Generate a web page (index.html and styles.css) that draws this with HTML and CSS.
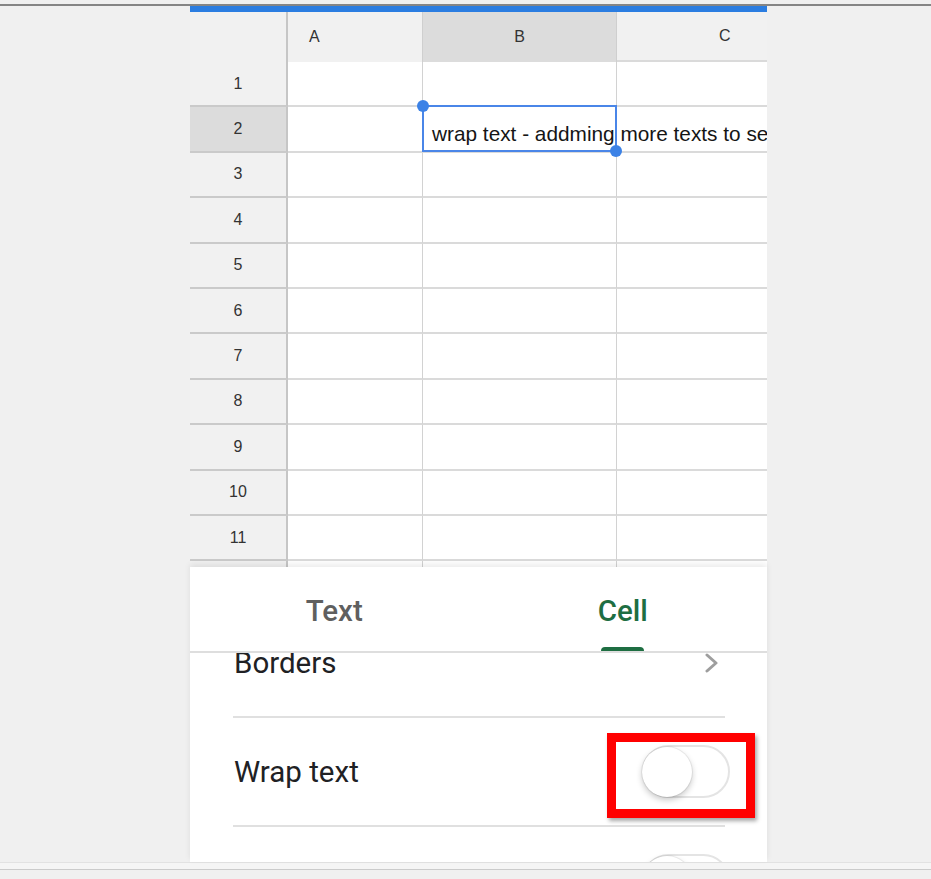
FILE: index.html
```html
<!DOCTYPE html>
<html>
<head>
<meta charset="utf-8">
<title>Wrap text</title>
<link rel="stylesheet" href="styles.css">
</head>
<body>
<div class="topline"></div>
<div class="stage">
  <div class="phone">
    <div class="bluebar"></div>
    <div class="grid">
      <div class="corner"></div>
      <div class="ch a">A</div>
      <div class="ch b sel">B</div>
      <div class="ch c">C</div>

      <div class="rh">1</div><div class="c"></div><div class="c"></div><div class="c last"></div>
      <div class="rh sel">2</div><div class="c"></div>
      <div class="c b2"><span class="celltext">wrap text - addming more texts to see</span><div class="selbox"><span class="h tl"></span><span class="h br"></span></div></div>
      <div class="c last"></div>
      <div class="rh">3</div><div class="c"></div><div class="c"></div><div class="c last"></div>
      <div class="rh">4</div><div class="c"></div><div class="c"></div><div class="c last"></div>
      <div class="rh">5</div><div class="c"></div><div class="c"></div><div class="c last"></div>
      <div class="rh">6</div><div class="c"></div><div class="c"></div><div class="c last"></div>
      <div class="rh">7</div><div class="c"></div><div class="c"></div><div class="c last"></div>
      <div class="rh">8</div><div class="c"></div><div class="c"></div><div class="c last"></div>
      <div class="rh">9</div><div class="c"></div><div class="c"></div><div class="c last"></div>
      <div class="rh">10</div><div class="c"></div><div class="c"></div><div class="c last"></div>
      <div class="rh">11</div><div class="c"></div><div class="c"></div><div class="c last"></div>
      <div class="rh"></div><div class="c"></div><div class="c"></div><div class="c last"></div>
    </div>
    <div class="sheet">
      <div class="tabs">
        <div class="tab"><span class="label">Text</span></div>
        <div class="tab active"><span class="label">Cell</span><span class="ind"></span></div>
      </div>
      <div class="list">
        <div class="list-inner">
          <div class="row">
            <span class="rl">Borders</span>
            <svg class="chev" width="14" height="20" viewBox="0 0 14 20"><polyline points="2,2 11,10 2,18" fill="none" stroke="#9e9e9e" stroke-width="3" stroke-linecap="round" stroke-linejoin="round"/></svg>
          </div>
          <div class="row">
            <span class="rl">Wrap text</span>
            <div class="toggle"><span class="knob"></span></div>
            <div class="annot"></div>
          </div>
          <div class="row">
            <span class="rl"></span>
            <div class="toggle"><span class="knob"></span></div>
          </div>
        </div>
      </div>
    </div>
  </div>
</div>
<div class="footer"></div>
</body>
</html>
```
FILE: styles.css
```css
* { box-sizing: border-box; }
html, body { margin: 0; padding: 0; }
body {
  background: #f0f0f0;
  font-family: Roboto, "Liberation Sans", sans-serif;
  width: 931px;
  height: 879px;
  overflow: hidden;
}
.topline { margin-top: 4px; height: 2px; background: #858585; }
.stage { padding-left: 190px; }
.phone {
  width: 577px;
  height: 856px;
  display: flex;
  flex-direction: column;
  background: #fff;
}
.bluebar { height: 6px; background: #2b7de1; flex: none; }
.grid {
  flex: none;
  height: 555px;
  overflow: hidden;
  display: grid;
  grid-template-columns: 98px 135px 194px 150px;
  grid-template-rows: 50px repeat(12, 45.4px);
  background: #fff;
}
.corner { background: #f1f1f1; border-right: 2px solid #c6c6c6; }
.ch {
  background: #f1f1f1;
  border-right: 1px solid #cfcfcf;
  display: flex;
  align-items: center;
  font-family: "Liberation Sans", Arial, sans-serif;
  font-size: 16px;
  color: #333;
}
.ch.a { padding-left: 21px; }
.ch.b { justify-content: center; }
.ch.c { padding-left: 102px; border-right: none; }
.ch.sel { background: #dcdcdc; }
.rh {
  background: #f1f1f1;
  border-right: 2px solid #c6c6c6;
  border-bottom: 2px solid #cacaca;
  display: flex;
  align-items: center;
  justify-content: center;
  font-family: "Liberation Sans", Arial, sans-serif;
  font-size: 16px;
  color: #333;
}
.rh.sel { background: #dcdcdc; }
.c {
  border-right: 1px solid #d2d2d2;
  border-bottom: 2px solid #dadada;
  position: relative;
}
.c.last { border-right: none; }
.c.b2 {
  display: flex;
  align-items: flex-end;
  padding: 0 0 5px 9px;
  overflow: visible;
  z-index: 2;
}
.celltext {
  white-space: nowrap;
  font-family: "Liberation Sans", Arial, sans-serif;
  font-size: 20.8px;
  line-height: 24px;
  color: #151515;
  position: relative;
  z-index: 3;
}
.selbox {
  position: absolute;
  top: -2px; left: -1px; right: -1px; bottom: -1px;
  border: 2px solid #4a86e8;
}
.h {
  position: absolute;
  width: 12px; height: 12px;
  border-radius: 50%;
  background: #3c82e6;
}
.h.tl { top: -7px; left: -7px; }
.h.br { bottom: -7px; right: -7px; }

.sheet {
  flex: 1;
  display: flex;
  flex-direction: column;
  background: #fff;
  position: relative;
  z-index: 4;
  box-shadow: 0 -3px 6px rgba(0,0,0,0.08);
  min-height: 0;
}
.tabs {
  flex: none;
  height: 86px;
  display: flex;
  border-bottom: 2px solid #dedede;
}
.tab {
  flex: 1;
  display: flex;
  flex-direction: column;
  align-items: center;
  font-size: 29.5px;
  font-weight: 500;
  color: #5f5f5f;
}
.tab .label { padding-top: 27px; line-height: 34px; }
.tab.active { color: #1e6e42; }
.ind {
  margin-top: auto;
  width: 43px;
  height: 4px;
  background: #1e6e42;
  border-radius: 4px 4px 0 0;
}
.list { flex: 1; overflow: hidden; min-height: 0; }
.list-inner { margin-top: -44px; }
.row {
  height: 109px;
  margin: 0 42px 0 43px;
  border-bottom: 2px solid #e0e0e0;
  display: flex;
  align-items: center;
  justify-content: space-between;
  font-size: 29.5px;
  color: #202124;
  position: relative;
}
.rl { padding-left: 1px; }
.chev { margin-right: 6px; }
.toggle {
  width: 88px;
  height: 53px;
  border: 2px solid #e4e4e4;
  border-radius: 27px;
  margin-right: -5px;
  display: flex;
  align-items: center;
  background: #fff;
}
.knob {
  width: 50px;
  height: 50px;
  margin-left: -2px;
  border-radius: 50%;
  background: #fff;
  box-shadow: 0 3px 6px rgba(0,0,0,0.22), 0 0 0 1px rgba(0,0,0,0.06);
}
.annot {
  position: absolute;
  left: 374px;
  top: 15px;
  width: 148px;
  height: 85px;
  border: 9px solid #ff0000;
  box-shadow: 2px 3px 4px rgba(0,0,0,0.35);
}
.footer {
  height: 8px;
  border-top: 1px solid #e2e2e2;
  background: #f5f5f5;
  border-bottom: 1px solid #cbcbcb;
}
```
